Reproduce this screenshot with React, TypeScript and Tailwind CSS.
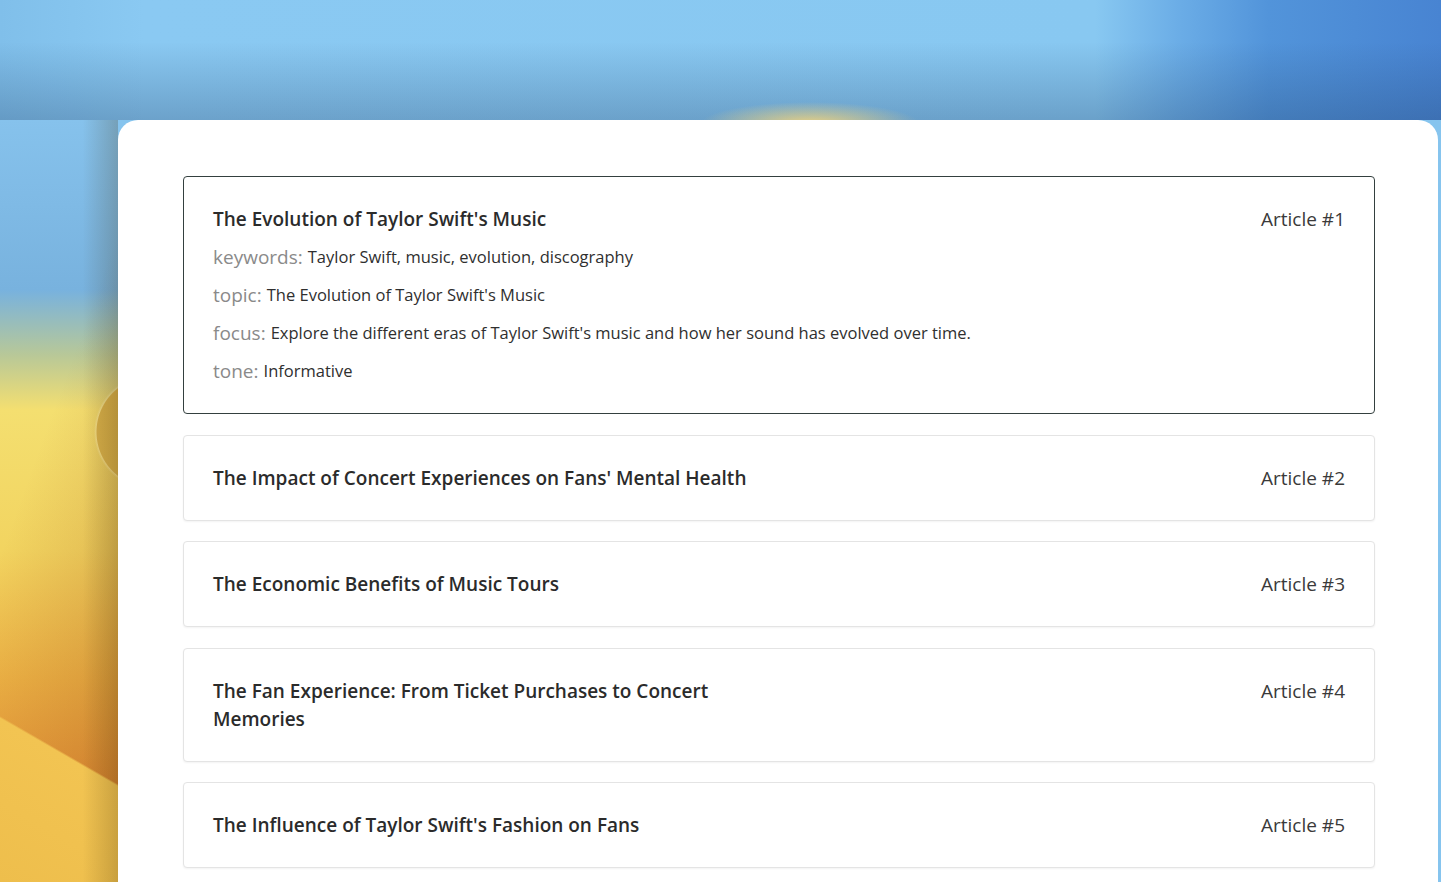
import React from "react";

interface Article {
  id: number;
  title: string;
  keywords?: string;
  topic?: string;
  focus?: string;
  tone?: string;
}

const ARTICLES: Article[] = [
  {
    id: 1,
    title: "The Evolution of Taylor Swift's Music",
    keywords: "Taylor Swift, music, evolution, discography",
    topic: "The Evolution of Taylor Swift's Music",
    focus:
      "Explore the different eras of Taylor Swift's music and how her sound has evolved over time.",
    tone: "Informative",
  },
  { id: 2, title: "The Impact of Concert Experiences on Fans' Mental Health" },
  { id: 3, title: "The Economic Benefits of Music Tours" },
  { id: 4, title: "The Fan Experience: From Ticket Purchases to Concert Memories" },
  { id: 5, title: "The Influence of Taylor Swift's Fashion on Fans" },
];

function Field({ label, value }: { label: string; value: string }) {
  return (
    <p className="mt-[10px] flex h-[28px] items-center gap-[5px] text-[#2f2f2f]">
      <span className="text-[19px] leading-[28px] text-[#8a8a8a]">{label}:</span>
      <span className="text-[16.5px] leading-[28px]">{value}</span>
    </p>
  );
}

function ArticleCard({ article, open }: { article: Article; open: boolean }) {
  return (
    <div
      className={`rounded-[4px] border bg-white px-[29px] py-[28px] ${
        open
          ? "border-[#34403f]"
          : "border-[#e4e4e4] shadow-[0_1px_2px_rgba(0,0,0,0.05)]"
      }`}
    >
      <div className="flex items-start justify-between gap-4">
        <h3 className="w-[560px] text-[19px] font-semibold leading-[28px] text-[#2b2b2b]">
          {article.title}
        </h3>
        <span className="text-[19px] leading-[28px] text-[#3a3a3a]">
          Article #{article.id}
        </span>
      </div>
      {open && (
        <div>
          <Field label="keywords" value={article.keywords!} />
          <Field label="topic" value={article.topic!} />
          <Field label="focus" value={article.focus!} />
          <Field label="tone" value={article.tone!} />
        </div>
      )}
    </div>
  );
}

export default function App() {
  return (
    <div
      className="flex h-[882px] w-full flex-col overflow-hidden bg-[#86c4ee]"
      style={{ fontFamily: '"Open Sans", "Liberation Sans", sans-serif' }}
    >
      {/* wallpaper, top strip */}
      <div className="h-[120px] shrink-0 bg-[image:radial-gradient(ellipse_110px_22px_at_810px_124px,rgba(250,215,120,0.9),rgba(250,215,120,0)),linear-gradient(to_bottom,rgba(30,60,100,0)_35%,rgba(30,60,100,0.28)_100%),linear-gradient(to_right,#80bfea_0%,#8ac9f2_10%,#88c8f1_76%,#6aace6_82%,#5294da_88%,#4884d2_100%)]" />

      {/* wallpaper left strip + main card */}
      <div className="flex min-h-0 flex-1">
        <div className="w-[118px] shrink-0 bg-[image:linear-gradient(to_right,rgba(60,40,0,0)_70%,rgba(60,40,0,0.22)_100%),radial-gradient(circle_at_152px_312px,#d6ad48_0,#d8b04a_55px,rgba(255,240,190,0.35)_56px,rgba(255,240,190,0)_58px),linear-gradient(210deg,rgba(0,0,0,0)_0,rgba(0,0,0,0)_575px,#f2c452_577px,#eebe4c_100%),linear-gradient(110deg,rgba(0,0,0,0)_40%,rgba(150,70,20,0.35)_100%),linear-gradient(to_bottom,#86c2ec_0,#78b2de_170px,#b8c898_235px,#f4df70_290px,#f2d460_430px,#eeb446_560px,#e89a3a_660px,#e89236_762px)]" />

        <main className="mr-[3px] flex-1 rounded-t-[20px] bg-white pl-[65px] pr-[63px] pt-[56px]">
          <div className="flex flex-col gap-[20.6px]">
            {ARTICLES.map((a) => (
              <ArticleCard key={a.id} article={a} open={a.id === 1} />
            ))}
          </div>
        </main>
      </div>
    </div>
  );
}
